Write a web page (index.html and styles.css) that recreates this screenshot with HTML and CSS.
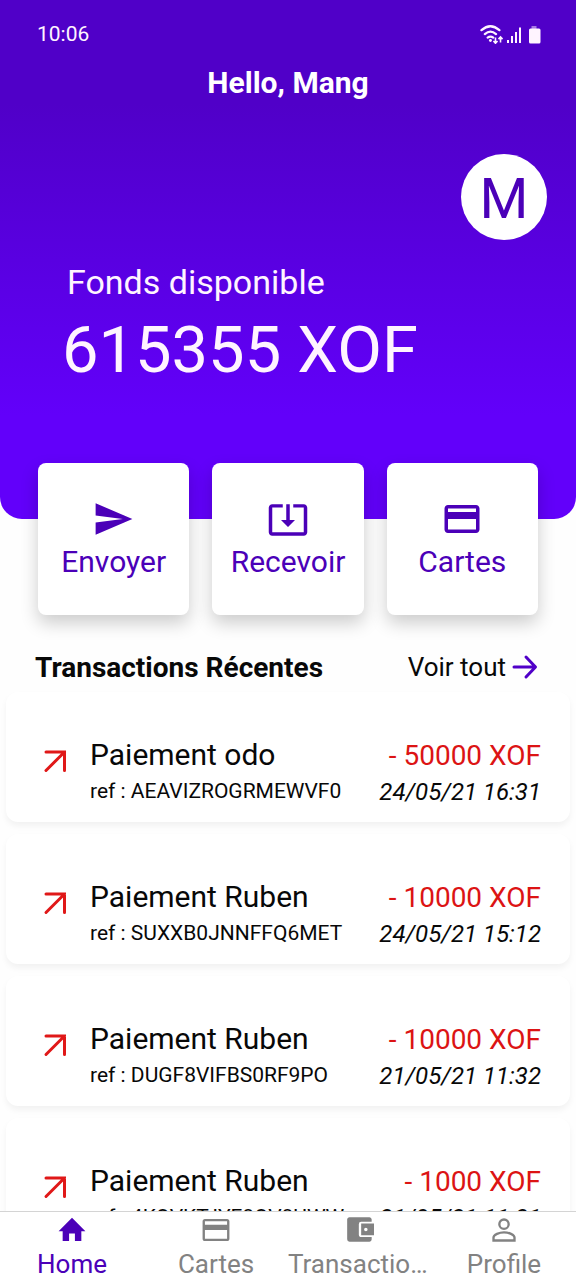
FILE: index.html
```html
<!DOCTYPE html>
<html lang="fr">
<head>
<meta charset="utf-8">
<meta name="viewport" content="width=device-width, initial-scale=1">
<title>Accueil</title>
<link rel="stylesheet" href="styles.css">
</head>
<body>
<div class="app">
  <main class="content">
    <header class="hero">
      <div class="status">
        <span>10:06</span>
        <svg class="status-icons" viewBox="0 0 64 20" aria-hidden="true">
          <g transform="translate(-3 0) scale(1.12)">
            <path d="M4 5.500Q12 -1.500 20 5.500M7 9Q12 4.500 17 9M9.500 12.200Q12 10.200 14.500 12.200" fill="none" stroke="currentColor" stroke-width="2" stroke-linecap="round"/>
            <circle cx="12" cy="14.700" r="1.300" fill="currentColor"/>
            <path d="M16.500 12v5M14.700 15.200l1.800 2 1.800-2M21 16.500v-5M19.200 13.500l1.800-2 1.800 2" fill="none" stroke="currentColor" stroke-width="1.400"/>
          </g>
          <path d="M28 19v-3M32 19v-7M36 19v-11M40 19v-15.500" fill="none" stroke="currentColor" stroke-width="2"/>
          <path d="M51.500 2h5v3h-5z" fill="currentColor" opacity=".5"/>
          <rect x="49" y="4.500" width="11.500" height="15" rx="1.500" fill="currentColor"/>
        </svg>
      </div>
      <h1 class="greeting">Hello, Mang</h1>
      <div class="avatar">M</div>
      <p class="fund-label">Fonds disponible</p>
      <p class="fund-amount">615355 XOF</p>
    </header>

    <div class="actions">
      <button class="action" type="button">
        <svg class="action-icon" viewBox="0 0 24 24" fill="currentColor" aria-hidden="true"><path d="M1.500 3v7L17 12 1.500 14v7L22.500 12z"/></svg>
        Envoyer
      </button>
      <button class="action" type="button">
        <svg class="action-icon" viewBox="0 0 24 24" fill="currentColor" aria-hidden="true"><path d="M12 16.500l4-4h-3v-9h-2v9H8l4 4zm9-13h-6v1.990h6v14.030H3V5.490h6V3.500H3c-1.100 0-2 .9-2 2v14c0 1.100.9 2 2 2h18c1.100 0 2-.9 2-2v-14c0-1.100-.9-2-2-2z"/></svg>
        Recevoir
      </button>
      <button class="action" type="button">
        <svg class="action-icon" viewBox="0 0 24 24" fill="currentColor" aria-hidden="true"><path d="M20 4H4c-1.110 0-1.990.890-1.990 2L2 18c0 1.110.890 2 2 2h16c1.110 0 2-.890 2-2V6c0-1.110-.890-2-2-2zm0 14H4v-6h16v6zm0-10H4V6h16v2z"/></svg>
        Cartes
      </button>
    </div>

    <div class="section-head">
      <h2 class="section-title">Transactions Récentes</h2>
      <a class="see-all" href="#">Voir tout
        <svg class="see-all-icon" viewBox="0 0 26 26" fill="none" stroke="currentColor" stroke-width="3" stroke-linecap="round" stroke-linejoin="round" aria-hidden="true"><path d="M2 13h21M14 3l9.500 10-9.500 10"/></svg>
      </a>
    </div>

    <ul class="list">
      <li class="row">
        <svg class="row-icon" viewBox="0 0 24 24" aria-hidden="true"><path d="M3 3h18.500v18.500M21.500 3L3 21.500"/></svg>
        <div class="row-main"><p class="name">Paiement odo</p><p class="ref">ref : AEAVIZROGRMEWVF0</p></div>
        <div class="row-side"><p class="amount">- 50000 XOF</p><p class="date">24/05/21 16:31</p></div>
      </li>
      <li class="row">
        <svg class="row-icon" viewBox="0 0 24 24" aria-hidden="true"><path d="M3 3h18.500v18.500M21.500 3L3 21.500"/></svg>
        <div class="row-main"><p class="name">Paiement Ruben</p><p class="ref">ref : SUXXB0JNNFFQ6MET</p></div>
        <div class="row-side"><p class="amount">- 10000 XOF</p><p class="date">24/05/21 15:12</p></div>
      </li>
      <li class="row">
        <svg class="row-icon" viewBox="0 0 24 24" aria-hidden="true"><path d="M3 3h18.500v18.500M21.500 3L3 21.500"/></svg>
        <div class="row-main"><p class="name">Paiement Ruben</p><p class="ref">ref : DUGF8VIFBS0RF9PO</p></div>
        <div class="row-side"><p class="amount">- 10000 XOF</p><p class="date">21/05/21 11:32</p></div>
      </li>
      <li class="row">
        <svg class="row-icon" viewBox="0 0 24 24" aria-hidden="true"><path d="M3 3h18.500v18.500M21.500 3L3 21.500"/></svg>
        <div class="row-main"><p class="name">Paiement Ruben</p><p class="ref">ref : 4KOVKTJYF8OV8UWW</p></div>
        <div class="row-side"><p class="amount">- 1000 XOF</p><p class="date">21/05/21 11:21</p></div>
      </li>
    </ul>
  </main>

  <nav class="tabs">
    <a class="tab tab-active" href="#">
      <svg class="tab-icon" viewBox="0 0 24 24" fill="currentColor" aria-hidden="true"><path d="M9.500 21.500v-6.500h5v6.500h5.500V13h3.500L12 1.500.5 13H4v8.500z"/></svg>
      <span class="tab-label">Home</span>
    </a>
    <a class="tab" href="#">
      <svg class="tab-icon" viewBox="0 0 24 24" fill="currentColor" aria-hidden="true"><path d="M21.500 2.500H2.500c-1.200 0-2 .9-2 2v15c0 1.100.8 2 2 2h19c1.200 0 2-.9 2-2v-15c0-1.100-.8-2-2-2zm0 17H2.500V12h19v7.500zM21.500 7.500H2.500v-3h19v3z"/></svg>
      <span class="tab-label">Cartes</span>
    </a>
    <a class="tab" href="#">
      <svg class="tab-icon" viewBox="0 0 24 24" fill="currentColor" aria-hidden="true"><path d="M22 18v2c0 1.100-.9 2-2 2H3a2 2 0 0 1-2-2V3c0-1.100.9-2 2-2h17c1.100 0 2 .9 2 2v2h-9a2 2 0 0 0-2 2v9c0 1.100.9 2 2 2zm-9-1.500h11v-10H13zm4-3.500a1.500 1.500 0 1 1 0-3 1.500 1.500 0 0 1 0 3z"/></svg>
      <span class="tab-label">Transactions</span>
    </a>
    <a class="tab" href="#">
      <svg class="tab-icon" viewBox="0 0 24 24" fill="none" stroke="currentColor" stroke-width="2" aria-hidden="true"><circle cx="12" cy="7" r="4"/><path d="M3 21v-2.500c0-2.600 5-4.500 9-4.500s9 1.900 9 4.500V21z"/></svg>
      <span class="tab-label">Profile</span>
    </a>
  </nav>
</div>
</body>
</html>
```
FILE: styles.css
```css
* { box-sizing: border-box; }

body, h1, h2, p, ul { margin: 0; padding: 0; }

body {
  font-family: Roboto, "Liberation Sans", sans-serif;
  color: #080808;
  background: #fefefe;
}

.app {
  display: flex;
  flex-direction: column;
  height: 100vh;
}

.content {
  flex: 1;
  min-height: 0;
  overflow: hidden;
}

.hero {
  display: flex;
  flex-direction: column;
  padding: 20px 29px 131px;
  color: #fff4ff;
  background: linear-gradient(#5000c8 20%, #6200fa 80%);
  border-radius: 0 0 22px 22px;
}

.status {
  display: flex;
  justify-content: space-between;
  align-items: center;
  padding: 0 3px 0 8px;
  font-size: 21px;
  line-height: 28px;
}

.status-icons {
  width: 64px;
  height: 20px;
}

.greeting {
  margin-top: 17px;
  font-size: 30px;
  line-height: 36px;
  text-align: center;
  color: #fff;
}

.avatar {
  display: flex;
  align-items: center;
  justify-content: center;
  align-self: flex-end;
  width: 86px;
  height: 86px;
  margin-top: 53px;
  padding-top: 4px;
  border-radius: 50%;
  background: #fff;
  color: #4b00b8;
  font-size: 56px;
}

.fund-label {
  margin: 20px 0 0 38px;
  font-size: 34px;
  line-height: 44px;
}

.fund-amount {
  margin: 8px 0 0 33px;
  font-size: 65px;
  line-height: 76px;
}

.actions {
  display: flex;
  gap: 23px;
  margin-top: -56px;
  padding: 0 38px;
}

.action {
  flex: 1;
  display: flex;
  flex-direction: column;
  align-items: center;
  justify-content: center;
  gap: 4px;
  height: 152px;
  padding: 0;
  border: 0;
  border-radius: 8px;
  background: #fff;
  box-shadow: 0 8px 18px rgba(0, 0, 0, .2);
  color: #4b00b8;
  font-family: inherit;
  font-size: 30px;
  line-height: 36px;
}

.action-icon {
  width: 42px;
  height: 42px;
}

.section-head {
  display: flex;
  justify-content: space-between;
  align-items: center;
  padding: 34px 38px 0 35px;
}

.section-title {
  padding-top: 2px;
  font-size: 28px;
  line-height: 34px;
}

.see-all {
  display: flex;
  align-items: center;
  gap: 6px;
  color: inherit;
  font-size: 26px;
  text-decoration: none;
}

.see-all-icon {
  width: 26px;
  height: 26px;
  color: #5000c8;
}

.list {
  display: grid;
  gap: 12px;
  margin-top: 7px;
  padding: 0 6px;
  list-style: none;
}

.row {
  display: flex;
  align-items: center;
  height: 130px;
  padding: 28px 29px 0 37px;
  border-radius: 12px;
  background: #fff;
  box-shadow: 0 4px 6px rgba(0, 0, 0, .05);
}

.row-icon {
  align-self: flex-start;
  width: 24px;
  height: 24px;
  margin-top: 29px;
  fill: none;
  stroke: #e01818;
  stroke-width: 3;
  stroke-linecap: round;
}

.row-main {
  flex: 1;
  margin-left: 23px;
}

.row-side {
  text-align: right;
}

.name {
  font-size: 30px;
  line-height: 40px;
}

.ref {
  font-size: 21px;
  line-height: 32px;
}

.amount {
  color: #dc1414;
  font-size: 28px;
  line-height: 42px;
}

.date {
  font-size: 24px;
  font-style: italic;
  line-height: 30px;
}

.tabs {
  display: grid;
  grid-template-columns: repeat(4, minmax(0, 1fr));
  border-top: 1px solid #d4d4d4;
  background: #fff;
}

.tab {
  display: flex;
  flex-direction: column;
  align-items: center;
  gap: 4px;
  padding-top: 4px;
  color: #828282;
  text-decoration: none;
}

.tab-active { color: #4b00b8; }

.tab-icon {
  width: 28px;
  height: 28px;
}

.tab-label {
  max-width: 100%;
  overflow: hidden;
  font-size: 26px;
  line-height: 32px;
  text-overflow: ellipsis;
  white-space: nowrap;
}
```
